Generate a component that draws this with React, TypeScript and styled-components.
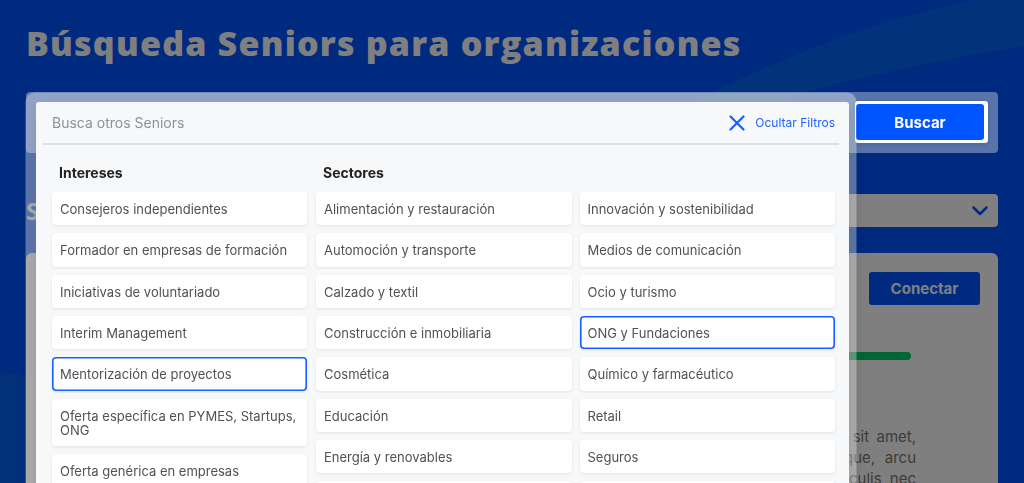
import React from "react";
import styled, { createGlobalStyle, css } from "styled-components";

const GlobalStyle = createGlobalStyle`
  html, body { margin: 0; padding: 0; }
  body { background: #0055ff; font-family: Inter, "Open Sans", sans-serif; }
  * { box-sizing: border-box; }
`;

const Page = styled.div`
  position: relative;
  min-height: 483px;
  overflow: hidden;
  background: #0055ff;
`;

const Waves = styled.svg`
  position: absolute;
  left: 0;
  top: 0;
  width: 1024px;
  height: 483px;
`;

const Content = styled.div`
  position: relative;
  padding: 23px 26px 0;
`;

const Title = styled.h1`
  margin: 0;
  font-family: "Open Sans", sans-serif;
  font-weight: 800;
  font-size: 34px;
  line-height: 40px;
  letter-spacing: 1.2px;
  color: #ffffff;
`;

const SearchBar = styled.div`
  position: relative;
  z-index: 2;
  margin-top: 29px;
  height: 61px;
  padding: 9px 10px 0 0;
  display: flex;
  justify-content: flex-end;
  align-items: flex-start;
  background: rgba(255, 255, 255, 0.35);
  border-radius: 4px;
`;

const ButtonFrame = styled.div`
  padding: 3px 4px 3px 1px;
  background: #ffffff;
  border-radius: 3px;
  box-shadow: 0 1px 4px rgba(0, 0, 0, 0.15);
`;

const SolidButton = styled.button<{ $w: number }>`
  width: ${(p) => p.$w}px;
  height: ${(p) => (p.$w > 120 ? 36 : 33)}px;
  border: 0;
  border-radius: 3px;
  background: #0055ff;
  color: #ffffff;
  font-family: Inter, sans-serif;
  font-weight: 700;
  font-size: 15px;
  cursor: pointer;
`;

const FilterPanel = styled.div`
  position: absolute;
  left: 10px;
  top: 10px;
  width: 813px;
  background: #f7f8fa;
  border-radius: 3px;
  box-shadow: -1.5px -0.5px 0 9px rgba(255, 255, 255, 0.35),
    0 6px 16px rgba(0, 0, 0, 0.25);
`;

const PanelHeader = styled.div`
  height: 41px;
  padding: 0 14px 0 16px;
  display: flex;
  align-items: center;
  justify-content: space-between;
`;

const Placeholder = styled.span`
  font-size: 14px;
  color: #8f9194;
`;

const HideFilters = styled.button`
  display: flex;
  align-items: center;
  gap: 10px;
  padding: 0;
  border: 0;
  background: none;
  font-family: Inter, sans-serif;
  font-size: 12px;
  color: #1f63ff;
  cursor: pointer;
`;

const Divider = styled.div`
  height: 2px;
  margin: 0 10px 0 7px;
  background: #dcdfe3;
`;

const PanelBody = styled.div`
  padding: 19px 14px 24px 16px;
  display: grid;
  grid-template-columns: 255px 1fr;
  column-gap: 9px;
  align-items: start;
`;

const GroupTitle = styled.h3`
  margin: 0 0 11px;
  padding-left: 7px;
  font-size: 14px;
  line-height: 17px;
  font-weight: 700;
  color: #222222;
`;

const ItemColumn = styled.div`
  display: flex;
  flex-direction: column;
  gap: 8px;
`;

const SectorGrid = styled.div`
  display: grid;
  grid-template-columns: 1fr 1fr;
  grid-template-rows: repeat(8, auto);
  grid-auto-flow: column;
  column-gap: 8px;
  row-gap: 8px;
`;

const Chip = styled.div<{ $selected?: boolean }>`
  padding: 10px 8px 9.33px;
  font-size: 13px;
  line-height: 14px;
  color: #515151;
  background: #ffffff;
  border-radius: 4px;
  box-shadow: 0 1px 3px rgba(0, 0, 0, 0.09);
  ${(p) =>
    p.$selected &&
    css`
      box-shadow: inset 0 0 0 1.6px #1a5fff, 0 1px 3px rgba(0, 0, 0, 0.09);
    `}
`;

const SectionRow = styled.div`
  margin-top: 41px;
  height: 33px;
  display: flex;
  align-items: center;
  justify-content: space-between;
`;

const SectionTitle = styled.h2`
  margin: 0;
  font-family: "Open Sans", sans-serif;
  font-weight: 700;
  font-size: 24px;
  color: #ffffff;
`;

const SelectBox = styled.div`
  width: 420px;
  height: 33px;
  padding: 0 10px;
  display: flex;
  align-items: center;
  justify-content: flex-end;
  background: #ffffff;
  border-radius: 4px;
`;

const Card = styled.div`
  margin-top: 26px;
  min-height: 300px;
  padding: 19px 18px 30px;
  background: #ffffff;
  border-radius: 6px;
`;

const CardTop = styled.div`
  display: flex;
  justify-content: flex-end;
`;

const InfoColumn = styled.div`
  width: 360px;
  margin: 0 64px 0 auto;
`;

const ProgressBar = styled.div`
  margin: 47px 5px 0 0;
  height: 8px;
  border-radius: 4px;
  background: #00cc66;
`;

const Paragraph = styled.p`
  margin: 66px 0 0;
  font-size: 15px;
  line-height: 21px;
  color: #777777;
  text-align: justify;
  text-align-last: justify;
`;

const Overlay = styled.div`
  position: fixed;
  inset: 0;
  z-index: 1;
  background: rgba(0, 0, 0, 0.5);
`;

const intereses = [
  "Consejeros independientes",
  "Formador en empresas de formación",
  "Iniciativas de voluntariado",
  "Interim Management",
  "Mentorización de proyectos",
  "Oferta específica en PYMES, Startups, ONG",
  "Oferta genérica en empresas",
  "Otros",
];

const sectores = [
  "Alimentación y restauración",
  "Automoción y transporte",
  "Calzado y textil",
  "Construcción e inmobiliaria",
  "Cosmética",
  "Educación",
  "Energía y renovables",
  "Finanzas y banca",
  "Innovación y sostenibilidad",
  "Medios de comunicación",
  "Ocio y turismo",
  "ONG y Fundaciones",
  "Químico y farmacéutico",
  "Retail",
  "Seguros",
  "Tecnología y telecomunicaciones",
];

const selected = new Set(["Mentorización de proyectos", "ONG y Fundaciones"]);

export default function App() {
  return (
    <>
      <GlobalStyle />
      <Page>
        <Waves viewBox="0 0 1024 483" aria-hidden="true">
          <path
            d="M 690 104 C 790 52, 890 16, 975 0 L 1024 0 L 1024 46 C 925 62, 820 86, 735 112 Z"
            fill="#2ad49a"
            fillOpacity="0.13"
          />
          <path
            d="M 0 372 C 60 380, 130 400, 200 440 L 200 483 L 0 483 Z"
            fill="#2ad49a"
            fillOpacity="0.1"
          />
        </Waves>
        <Content>
          <Title>Búsqueda Seniors para organizaciones</Title>
          <SearchBar>
            <FilterPanel>
              <PanelHeader>
                <Placeholder>Busca otros Seniors</Placeholder>
                <HideFilters>
                  <svg width="16" height="16" viewBox="0 0 16 16">
                    <path
                      d="M1.5 1.5 L14.5 14.5 M14.5 1.5 L1.5 14.5"
                      stroke="#1a5cff"
                      strokeWidth="2.2"
                      strokeLinecap="round"
                    />
                  </svg>
                  Ocultar Filtros
                </HideFilters>
              </PanelHeader>
              <Divider />
              <PanelBody>
                <div>
                  <GroupTitle>Intereses</GroupTitle>
                  <ItemColumn>
                    {intereses.map((t) => (
                      <Chip key={t} $selected={selected.has(t)}>
                        {t}
                      </Chip>
                    ))}
                  </ItemColumn>
                </div>
                <div>
                  <GroupTitle>Sectores</GroupTitle>
                  <SectorGrid>
                    {sectores.map((t) => (
                      <Chip key={t} $selected={selected.has(t)}>
                        {t}
                      </Chip>
                    ))}
                  </SectorGrid>
                </div>
              </PanelBody>
            </FilterPanel>
            <ButtonFrame>
              <SolidButton $w={128}>Buscar</SolidButton>
            </ButtonFrame>
          </SearchBar>
          <SectionRow>
            <SectionTitle>Seniors destacados</SectionTitle>
            <SelectBox>
              <svg width="16" height="10" viewBox="0 0 16 10">
                <path
                  d="M1.5 1.5 L8 8 L14.5 1.5"
                  stroke="#0055ff"
                  strokeWidth="2.5"
                  fill="none"
                  strokeLinecap="round"
                  strokeLinejoin="round"
                />
              </svg>
            </SelectBox>
          </SectionRow>
          <Card>
            <CardTop>
              <SolidButton $w={111}>Conectar</SolidButton>
            </CardTop>
            <InfoColumn>
              <ProgressBar />
              <Paragraph>
                Lorem ipsum dolor consectetur sed do sit amet,
                <br />
                Vivamus lacinia tellus sed ut quis neque, arcu
                <br />
                mollis porta sapien vel ut in quis et iaculis nec
              </Paragraph>
            </InfoColumn>
          </Card>
        </Content>
        <Overlay />
      </Page>
    </>
  );
}
